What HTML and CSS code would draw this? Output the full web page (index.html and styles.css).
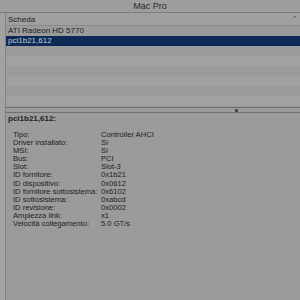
FILE: index.html
```html
<!DOCTYPE html>
<html lang="it">
<head>
    <meta charset="UTF-8">
    <title>Mac Pro</title>
    <link rel="stylesheet" href="styles.css">
</head>
<body>
    <div class="titlebar">Mac Pro</div>
    <div class="window">
        <div class="sidebar"></div>
        <div class="content">
            <div class="table">
                <div class="table-header">
                    <span>Scheda</span>
                    <span class="sort">&#8963;</span>
                </div>
                <div class="row">ATI Radeon HD 5770</div>
                <div class="row selected">pci1b21,612</div>
                <div class="row"></div>
                <div class="row"></div>
                <div class="row"></div>
                <div class="row"></div>
                <div class="row"></div>
                <div class="row"></div>
            </div>
            <div class="divider"><span class="grip"></span></div>
            <div class="detail">
                <div class="detail-title">pci1b21,612:</div>
                <div class="props">
                    <span>Tipo:</span><span>Controller AHCI</span>
                    <span>Driver installato:</span><span>Sì</span>
                    <span>MSI:</span><span>Sì</span>
                    <span>Bus:</span><span>PCI</span>
                    <span>Slot:</span><span>Slot-3</span>
                    <span>ID fornitore:</span><span>0x1b21</span>
                    <span>ID dispositivo:</span><span>0x0612</span>
                    <span>ID fornitore sottosistema:</span><span>0x6102</span>
                    <span>ID sottosistema:</span><span>0xabcd</span>
                    <span>ID revisione:</span><span>0x0002</span>
                    <span>Ampiezza link:</span><span>x1</span>
                    <span>Velocità collegamento:</span><span>5.0 GT/s</span>
                </div>
            </div>
        </div>
    </div>
</body>
</html>
```

FILE: styles.css
```css
* {
    margin: 0;
    padding: 0;
    box-sizing: border-box;
}

body {
    width: 300px;
    height: 300px;
    overflow: hidden;
    background: #9b9b9b;
    font-family: "Liberation Sans", Arial, sans-serif;
    color: #1c1c1c;
}

.titlebar {
    height: 13px;
    line-height: 12px;
    font-size: 9px;
    text-align: center;
    color: #2a2a2a;
    background: #9e9e9e;
    border-bottom: 1px solid #7c7c7c;
}

.window {
    display: flex;
    height: 287px;
}

.sidebar {
    width: 6px;
    background: #a2a2a2;
    border-right: 1px solid #818181;
}

.content {
    flex: 1;
    display: flex;
    flex-direction: column;
}

.table-header {
    height: 13px;
    display: flex;
    justify-content: space-between;
    align-items: center;
    padding: 0 2px 0 2px;
    font-size: 8px;
    background: #a0a0a0;
    border-bottom: 1px solid #8a8a8a;
}

.sort {
    font-size: 7px;
    color: #444;
}

.row {
    height: 10px;
    line-height: 10px;
    font-size: 8px;
    padding-left: 2px;
    background: #9b9b9b;
}

.row:nth-child(odd) {
    background: #a1a1a1;
}

.row.selected {
    background: #0b2a55;
    color: #c9cfd8;
}

.divider {
    height: 6px;
    margin-top: 1px;
    border-top: 1px solid #6f6f6f;
    border-bottom: 1px solid #6f6f6f;
    position: relative;
}

.grip {
    position: absolute;
    left: 229px;
    top: 1px;
    width: 3px;
    height: 3px;
    border-radius: 50%;
    background: #333;
}

.detail {
    padding: 1px 0 0 2px;
    font-size: 8px;
}

.detail-title {
    font-weight: bold;
    height: 17px;
}

.props {
    display: grid;
    grid-template-columns: 88px auto;
    font-size: 7.6px;
    line-height: 8.1px;
    padding-left: 5px;
    white-space: nowrap;
}
```
